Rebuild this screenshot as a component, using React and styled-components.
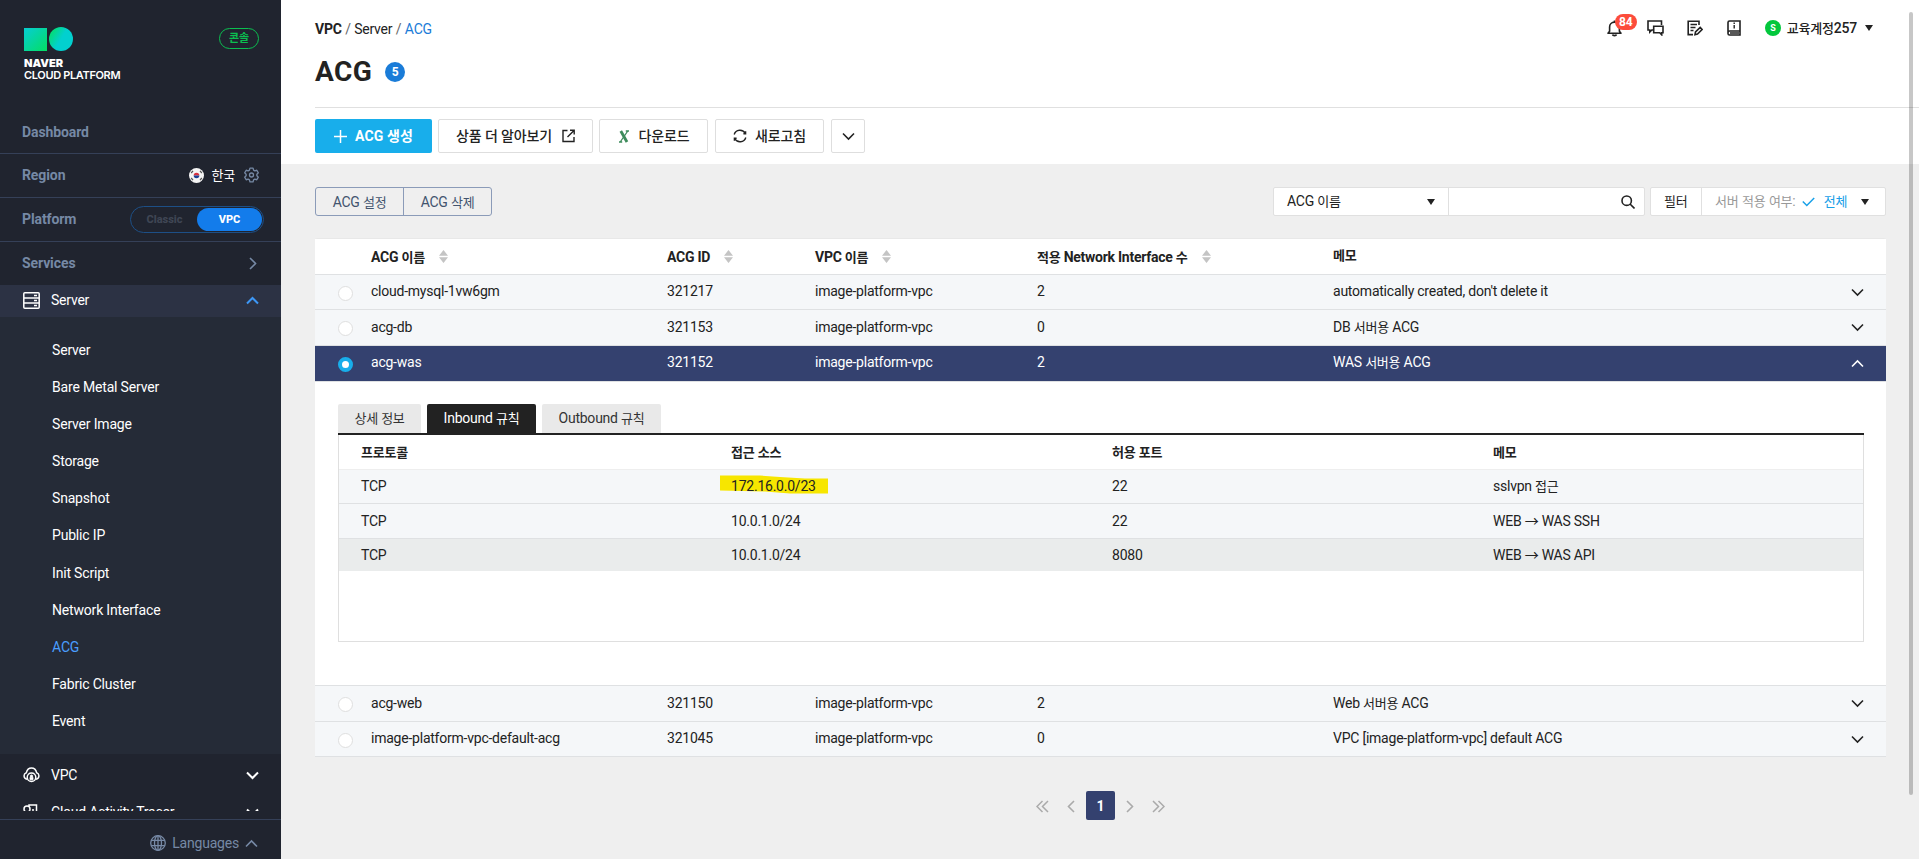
import React from "react";
import styled, { createGlobalStyle, css } from "styled-components";

const Global = createGlobalStyle`
  * { box-sizing: border-box; }
  body { margin: 0; background: #efefef; color: #222; overflow: hidden;
    font: 14px/20px Roboto, "Noto Sans CJK KR", sans-serif; letter-spacing: -0.23px; }
  button { font: inherit; letter-spacing: inherit; color: inherit; padding: 0; cursor: pointer; }
  svg { display: block; flex: none; }
`;

/* Hangul is set slightly smaller than the Latin text beside it */
const Hangul = styled.span`font-size: 0.93em; line-height: 1; letter-spacing: -0.25px;`;
const Mixed = ({ children }) => (
  <span>{String(children).split(/([\uac00-\ud7a3]+)/).map((s, i) => (i % 2 ? <Hangul key={i}>{s}</Hangul> : s))}</span>
);

const Shell = styled.div`display: flex; width: 100vw; height: 859px;`;

/* ---------- sidebar ---------- */
const Sidebar = styled.aside`
  width: 281px; height: 859px; flex: none; background: #20242f;
  display: flex; flex-direction: column;
`;
const Brand = styled.div`
  height: 111px; padding: 27px 22px 0 24px; display: flex; justify-content: space-between; align-items: flex-start; flex: none;
`;
const BrandName = styled.div`
  margin-top: 5px; color: #fff; font-family: Inter, sans-serif; font-size: 11px; line-height: 12px; font-weight: 600; letter-spacing: -0.35px;
  strong { display: block; font-weight: 900; letter-spacing: 0; }
`;
const ConsoleTag = styled.span`
  margin-top: 1px; width: 40px; height: 21px; border: 1.5px solid #0bbf50; border-radius: 11px;
  color: #0bbf50; font-size: 11px; line-height: 19px; text-align: center; font-weight: 700;
`;
const MenuLine = styled.div`
  height: ${(p) => p.$h || 44}px; flex: none; padding: 0 22px ${(p) => p.$up || 0}px; display: flex; align-items: center; justify-content: space-between;
  color: #7689a5; font-weight: 700; letter-spacing: -0.1px;
  border-bottom: ${(p) => (p.$last ? "0" : "1px solid #354058")};
`;
const RegionBox = styled.span`display: flex; align-items: center; color: #fff; font-weight: 400;
  & > span { margin: 0 9px 0 8px; }
`;
const Toggle = styled.span`
  width: 134px; height: 27px; margin-right: -5px; border: 1px solid #1d4f86; border-radius: 14px; padding: 1px; display: flex; 
  font-size: 11px; line-height: 23px; font-weight: 800; text-align: center; letter-spacing: 0;
`;
const ToggleItem = styled.span`
  flex: ${(p) => (p.$on ? "0 0 65px" : "1")}; border-radius: 12px;
  background: ${(p) => (p.$on ? "#137ceb" : "transparent")}; color: ${(p) => (p.$on ? "#fff" : "#3f4654")};
`;
const Group = styled.div`
  height: ${(p) => p.$h}px; flex: none; padding: 0 22px ${(p) => p.$up || 0}px 23px; display: flex; align-items: center; color: #fff;
  background: ${(p) => (p.$open ? "#2c3244" : "transparent")};
  span { margin-left: 11px; flex: 1; }
`;
const SubMenu = styled.nav`
  height: 437px; flex: none; background: #252b37; padding: 14px 0 0 52px;
`;
const SubItem = styled.a`
  display: block; height: 37.1px; line-height: 38px; color: ${(p) => (p.$active ? "#4a9eff" : "#fff")}; letter-spacing: -0.18px;
`;
const Clip = styled.div`height: 57px; overflow: hidden; flex: none;`;
const LangBar = styled.div`
  margin-top: 8px; height: 40px; flex: 1; border-top: 1px solid #354058; display: flex; align-items: center; justify-content: flex-end;
  padding: 7px 23px 0 0; gap: 6px; color: #7689a5; letter-spacing: -0.2px;
`;

/* ---------- page header ---------- */
const Main = styled.main`flex: 1; min-width: 0; position: relative;`;
const Header = styled.header`height: 164px; background: #fff; padding-left: 34px;`;
const TopBar = styled.div`height: 58px; padding: 0 46px 0 0; display: flex; align-items: center; justify-content: space-between;`;
const Crumbs = styled.div`
  b { font-weight: 700; } i { font-style: normal; color: #666; margin: 0 3.5px; } em { font-style: normal; color: #1a7cd8; }
`;
const Tools = styled.div`display: flex; align-items: center; height: 56px; align-self: flex-start;`;
const Tool = styled.span`width: 40px; display: flex;`;
const Bell = styled(Tool)`position: relative;`;
const BellCount = styled.span`
  position: absolute; left: 8px; top: -6px; width: 22px; height: 16px; border-radius: 8px; background: #fc4c3b; color: #fff;
  font-size: 12px; line-height: 16px; text-align: center; font-weight: 700; letter-spacing: 0;
`;
const Account = styled.span`
  display: flex; align-items: center; font-weight: 500; letter-spacing: -0.2px;
`;
const Avatar = styled.span`
  width: 16px; height: 16px; border-radius: 50%; background: #03c73c; color: #fff; font-size: 9px; line-height: 16px; text-align: center;
  font-weight: 700; margin: 0 6px 0 -2px;
`;
const Caret = styled.i`
  border: solid transparent; border-width: 6px 4px 0; border-top-color: #222; margin-left: ${(p) => p.$gap || 0}px;
`;
const TitleRow = styled.div`height: 50px; border-bottom: 1px solid #e0e0e0; display: flex; align-items: flex-start;`;
const Title = styled.h1`margin: 0; font-size: 28px; line-height: 28px; font-weight: 700; letter-spacing: 0.4px;`;
const Count = styled.span`
  margin: 4px 0 0 13px; width: 20px; height: 20px; border-radius: 50%; background: #1a7cd8; color: #fff; font-size: 12px; line-height: 20px;
  font-weight: 700; text-align: center; letter-spacing: 0;
`;
const Actions = styled.div`display: flex; padding-top: 11px;`;
const Action = styled.button`
  width: ${(p) => p.$w}px; height: 34px; margin-right: ${(p) => p.$mr || 6}px; border-radius: 2px; display: flex; align-items: center; justify-content: center;
  gap: ${(p) => p.$gap || 8}px; font-weight: 500; letter-spacing: -0.15px;
  ${(p) => p.$primary ? css`background: #18aeeb; color: #fff; border: 0; font-weight: 700; letter-spacing: 0.1px;` : css`background: #fff; border: 1px solid #dedede;`}
`;

/* ---------- content ---------- */
const Content = styled.section`padding: 23px 33px 0 34px;`;
const FilterRow = styled.div`display: flex; justify-content: space-between; height: 29px;`;
const Pair = styled.div`display: flex; border: 1px solid #8b9bb8; border-radius: 3px; width: 177px;`;
const PairButton = styled.button`
  flex: 1; border: 0; background: none; color: #42546e;
  & + & { border-left: 1px solid #8b9bb8; }
`;
const Boxes = styled.div`display: flex; gap: 5px;`;
const Box = styled.div`display: flex; background: #fff; border: 1px solid #e0e0e0; border-radius: 2px; line-height: 27px;`;
const Cell = styled.div`
  width: ${(p) => p.$w}px; display: flex; align-items: center; padding: 0 ${(p) => p.$pr ?? 13}px 0 13px; justify-content: ${(p) => p.$j || "space-between"};
  & + & { border-left: 1px solid #e0e0e0; }
`;
const Muted = styled.span`color: #999; letter-spacing: 0;`;
const Blue = styled.span`color: #18a0e8; margin-left: 9px;`;

const Table = styled.div`margin-top: 22px; background: #fff; border: solid #e8e8e8; border-width: 1px 0 0; border-radius: 2px;`;
const Row = styled.div`
  height: ${(p) => p.$h}px; border-bottom: 1px solid #dfe1e3; display: grid; grid-template-columns: 56px 296px 148px 222px 296px 1fr 36px; align-items: center;
  padding-bottom: 2px; background: #f5f7f9;
  ${(p) => p.$head && css`background: #fff; font-weight: 700; padding-bottom: 0; letter-spacing: -0.26px;`}
  ${(p) => p.$on && css`background: #34416f; color: #fff; padding-bottom: 3px;`}
`;
const HeadCell = styled.div`display: flex; align-items: center; gap: 14px; padding-bottom: ${(p) => (p.$plain ? 4 : 0)}px;`;
const Radio = styled.span`
  width: 15px; height: 15px; margin: 4px 0 0 23px; border-radius: 50%; display: block; background: #fff; border: 1px solid #dfdfdf;
  ${(p) => p.$on && css`border: 4px solid #18aeeb;`}
`;
const Toggler = styled.span`padding-top: 2px; svg { margin-left: 1px; }`;

const Detail = styled.div`height: 304px; padding: 22px 22px 0 23px; border-bottom: 1px solid #dfe1e3;`;
const Tabs = styled.div`display: flex; gap: 6px; height: 31px; border-bottom: 2px solid #222;`;
const Tab = styled.div`
  width: ${(p) => p.$w}px; background: ${(p) => (p.$on ? "#222" : "#e9e9e9")}; color: ${(p) => (p.$on ? "#fff" : "#333")};
  border-radius: 2px 2px 0 0; text-align: center; line-height: 29px;
`;
const Rules = styled.div`height: 207px; border: 1px solid #dfdfdf; border-top: 0;`;
const RuleRow = styled.div`
  height: ${(p) => p.$h}px; display: grid; grid-template-columns: 370px 381px 381px 1fr; padding: 0 0 ${(p) => p.$up || 0}px 22px; align-items: center;
  background: #f5f7f9; border-bottom: 1px solid #dfe1e3;
  ${(p) => p.$head && css`background: #fff; font-weight: 700; border-color: #eee;`}
  ${(p) => p.$hover && css`background: #eaecec; border: 0;`}
`;
const Marked = styled.span`position: relative; & > span { position: relative; }`;
const Stroke = styled.svg`position: absolute; left: -11px; top: -1px;`;

const Pager = styled.div`
  display: flex; justify-content: center; align-items: center; height: 29px; margin-top: 34px; color: #aaa; gap: 16px;
  svg { margin-top: 2px; }
`;
const Current = styled.span`
  width: 29px; height: 29px; border-radius: 2px; background: #34416f; color: #fff; text-align: center; line-height: 30px; font-weight: 700; margin: 0 -8px;
`;
const ScrollThumb = styled.div`position: absolute; right: 6px; top: 12px; width: 4px; height: 783px; border-radius: 2px; background: rgba(0, 0, 0, 0.22);`;

/* ---------- drawings ---------- */
const Chevron = ({ dir = "down", size = 13, w = 1.6, color = "currentColor" }) => {
  const d = { down: "M1 3.5l5.5 5.5L12 3.5", up: "M1 9.5L6.5 4 12 9.5", right: "M4 1l5.5 5.5L4 12", left: "M9 1L3.5 6.5 9 12" }[dir];
  return <svg width={size} height={size} viewBox="0 0 13 13" fill="none" stroke={color} strokeWidth={w}><path d={d} /></svg>;
};
const DoubleChevron = ({ flip }) => (
  <svg width="13" height="13" viewBox="0 0 13 13" fill="none" stroke="currentColor" strokeWidth="1.5">
    <path d={flip ? "M1 1l5.5 5.5L1 12M6.5 1L12 6.5 6.5 12" : "M6.5 1L1 6.5 6.5 12M12 1L6.5 6.5 12 12"} />
  </svg>
);
const Logo = () => (
  <svg width="50" height="25" viewBox="0 0 50 25">
    <defs>
      <linearGradient id="sq" x1="0" y1="0" x2="1" y2="1"><stop offset=".1" stopColor="#06cfc9" /><stop offset=".95" stopColor="#04de68" /></linearGradient>
      <linearGradient id="ci" x1="0" y1="0.1" x2="1" y2=".7"><stop offset=".05" stopColor="#04de68" /><stop offset=".55" stopColor="#02d0cf" /></linearGradient>
    </defs>
    <rect y="1" width="23" height="23" fill="url(#sq)" /><circle cx="37" cy="12" r="12" fill="url(#ci)" />
  </svg>
);
const Flag = () => (
  <svg width="15" height="15" viewBox="0 0 15 15">
    <circle cx="7.5" cy="7.5" r="7.5" fill="#f4f4f4" />
    <path d="M4.7 7.5a2.8 2.8 0 0 1 5.6 0z" fill="#d8303f" /><path d="M4.7 7.5a2.8 2.8 0 0 0 5.6 0z" fill="#1c3f94" />
    <path d="M2.2 5L4 2.8M11 2.8L12.8 5M2.2 10L4 12.2M11 12.2l1.8-2.2" stroke="#555" strokeWidth="1.2" />
  </svg>
);
const Gear = () => (
  <svg width="15" height="16" viewBox="0 0 24 25" fill="none" stroke="#7689a5" strokeWidth="2.1" strokeLinejoin="round">
    <path d="M9.5 1.5h5l.8 3.2 2 1.2 3.2-1 2.4 4.2-2.3 2.3v2.2l2.3 2.3-2.4 4.2-3.2-1-2 1.2-.8 3.2h-5l-.8-3.2-2-1.2-3.2 1L1.1 15.9l2.3-2.3v-2.2L1.1 9.1l2.4-4.2 3.2 1 2-1.2z" />
    <circle cx="12" cy="12.5" r="3.2" />
  </svg>
);
const ServerIcon = () => (
  <svg width="17" height="17" viewBox="0 0 17 17" fill="none" stroke="#fff" strokeWidth="1.5">
    <rect x=".8" y=".8" width="15.4" height="15.4" rx="1" /><path d="M1 6h15M1 11h15" /><path d="M11 3.5h3M11 8.5h3M11 13.5h3" />
  </svg>
);
const CloudIcon = () => (
  <svg width="17" height="16" viewBox="0 0 17 16" fill="none" stroke="#fff" strokeWidth="1.5">
    <path d="M4 12.2A3.3 3.3 0 0 1 3.3 5.8C4 2.8 6 1 8.5 1s4.5 1.8 5.2 4.8A3.3 3.3 0 0 1 13 12.2" />
    <circle cx="8.5" cy="10.3" r="4.3" /><path d="M7 12.8v-2.5h3v2.5zM7.4 10V9a1.1 1.1 0 0 1 2.2 0v1" fill="#fff" strokeWidth=".8" />
  </svg>
);
const TracerIcon = () => (
  <svg width="17" height="17" viewBox="0 0 17 17" fill="none" stroke="#fff" strokeWidth="1.5">
    <path d="M6 2V1h7.5v14H6M10 5v4" /><circle cx="4" cy="5" r="3" /><path d="M6 7l3 3" />
  </svg>
);
const Globe = () => (
  <svg width="16" height="16" viewBox="0 0 16 16" fill="none" stroke="#7689a5" strokeWidth="1.3">
    <circle cx="8" cy="8" r="7.3" /><ellipse cx="8" cy="8" rx="3.5" ry="7.3" /><path d="M8 .7v14.6M1.2 5.3h13.6M1.2 10.7h13.6" />
  </svg>
);
const BellIcon = () => (
  <svg width="15" height="17" viewBox="0 0 15 17" fill="none" stroke="#222" strokeWidth="1.6">
    <path d="M1 13.2h13l-1.6-2V7A4.9 4.9 0 0 0 2.6 7v4.2z" strokeLinejoin="round" /><path d="M5.5 14.5c.3 1.5 3.7 1.5 4 0M7.5 2V.5" />
  </svg>
);
const ChatIcon = () => (
  <svg width="17" height="16" viewBox="0 0 17 16" fill="none" stroke="#222" strokeWidth="1.6">
    <path d="M6 10H4.8L2.8 12V10H1V1h13.5v4" /><path d="M6.7 6.2h9.3v6.6h-1.3v2l-2-2h-6z" />
  </svg>
);
const NoteIcon = () => (
  <svg width="16" height="16" viewBox="0 0 16 16" fill="none" stroke="#222" strokeWidth="1.6">
    <path d="M12 5V1.2H1.2v13.4H6M3.5 4.5h6.5M3.5 7.5h5M3.5 10.5h3" /><path d="M8 14.6l.5-2.6 4.7-4.5 1.9 2-4.6 4.5z" />
  </svg>
);
const BookIcon = () => (
  <svg width="14" height="16" viewBox="0 0 14 16" fill="none" stroke="#222" strokeWidth="1.6">
    <path d="M13 11V1H2.5C1.5 1 1 1.6 1 2.5v11c0 1 .6 1.500 1.500 1.500H13v-4H2.500C1.500 11 1 12 1 13" /><path d="M7.200 5v3.500M7.200 2.500V4M3 13h9" strokeWidth="1.4" />
  </svg>
);
const External = () => (
  <svg width="13" height="14" viewBox="0 0 13 13" fill="none" stroke="#222" strokeWidth="1.4">
    <path d="M5.5 1H1v11h11V7.5M8 .8h4.200V5M12 1L5.500 7.500" />
  </svg>
);
const Refresh = () => (
  <svg width="14" height="14" viewBox="0 0 14 14" fill="none" stroke="#222" strokeWidth="1.4">
    <path d="M1.200 5.500A6 6 0 0 1 12.300 4.500M12.800 8.500A6 6 0 0 1 1.700 9.500M12.600 2.200v2.600H10.400M1.400 11.800V9.200h2.200" />
  </svg>
);
const Excel = () => (
  <svg width="12" height="13" viewBox="0 0 12 13" fill="none" stroke="#3d8b5b">
    <path d="M2.800 1L9 12" strokeWidth="2.800" /><path d="M9.800 1L2.200 12M7.800 1h3.200M1 12h3.200" strokeWidth="1.300" />
  </svg>
);
const Plus = () => <svg width="13" height="13" viewBox="0 0 13 13" stroke="#fff" strokeWidth="1.5"><path d="M6.500 0v13M0 6.500h13" /></svg>;
const Search = () => <svg width="14" height="14" viewBox="0 0 14 14" fill="none" stroke="#222" strokeWidth="1.6"><circle cx="5.700" cy="5.700" r="4.700" /><path d="M9 9l4.500 4.500" /></svg>;
const CheckMark = styled.svg`margin-left: 6px;`;
const Check = () => <CheckMark width="13" height="10" viewBox="0 0 13 10" fill="none" stroke="#18a0e8" strokeWidth="1.5"><path d="M.8 4.500l4 4L12.200 1" /></CheckMark>;
const Sort = () => <svg width="9" height="13" viewBox="0 0 9 13" fill="#c4c4c4"><path d="M0 5.700L4.500 0 9 5.700zM0 7.300h9L4.500 13z" /></svg>;

const subItems = ["Server", "Bare Metal Server", "Server Image", "Storage", "Snapshot", "Public IP", "Init Script", "Network Interface", "ACG", "Fabric Cluster", "Event"];
const groups = [
  { h: 35, name: "cloud-mysql-1vw6gm", id: "321217", n: 2, memo: "automatically created, don't delete it" },
  { h: 36, name: "acg-db", id: "321153", n: 0, memo: "DB 서버용 ACG" },
  { h: 36, name: "acg-was", id: "321152", n: 2, memo: "WAS 서버용 ACG", on: true },
  { h: 36, name: "acg-web", id: "321150", n: 2, memo: "Web 서버용 ACG" },
  { h: 35, name: "image-platform-vpc-default-acg", id: "321045", n: 0, memo: "VPC [image-platform-vpc] default ACG" },
];
const rules = [
  { h: 34, src: "172.16.0.0/23", port: "22", memo: "sslvpn 접근", mark: true },
  { h: 35, src: "10.0.1.0/24", port: "22", memo: "WEB → WAS SSH" },
  { h: 32, src: "10.0.1.0/24", port: "8080", memo: "WEB → WAS API", hover: true },
];

const RuleDetail = () => (
  <Detail>
    <Tabs>
      <Tab $w={83}><Mixed>상세 정보</Mixed></Tab><Tab $w={109} $on><Mixed>Inbound 규칙</Mixed></Tab><Tab $w={119}><Mixed>Outbound 규칙</Mixed></Tab>
    </Tabs>
    <Rules>
      <RuleRow $h={35} $head>
        {["프로토콜", "접근 소스", "허용 포트", "메모"].map((t) => <Mixed key={t}>{t}</Mixed>)}
      </RuleRow>
      {rules.map((r, i) => (
        <RuleRow key={i} $h={r.h} $hover={r.hover} $up={r.mark ? 1 : 0}>
          <span>TCP</span>
          {r.mark ? (
            <Marked>
              <Stroke width="109" height="20" viewBox="0 0 109 20"><path d="M0 .5L40 .5 60 2 85 3.5H108V18.500H70L45 16.500 0 15.500z" fill="#f7e600" /></Stroke>
              <span>{r.src}</span>
            </Marked>
          ) : <span>{r.src}</span>}
          <span>{r.port}</span><Mixed>{r.memo}</Mixed>
        </RuleRow>
      ))}
    </Rules>
  </Detail>
);

export default function App() {
  return (
    <Shell>
      <Global />
      <Sidebar>
        <Brand>
          <div><Logo /><BrandName><strong>NAVER</strong>CLOUD PLATFORM</BrandName></div>
          <ConsoleTag>콘솔</ConsoleTag>
        </Brand>
        <MenuLine $h={43}>Dashboard</MenuLine>
        <MenuLine $up={1}>Region<RegionBox><Flag /><Mixed>한국</Mixed><Gear /></RegionBox></MenuLine>
        <MenuLine $up={1}>Platform<Toggle><ToggleItem>Classic</ToggleItem><ToggleItem $on>VPC</ToggleItem></Toggle></MenuLine>
        <MenuLine $h={43} $up={1} $last>Services<Chevron dir="right" /></MenuLine>
        <Group $h={32} $up={2} $open><ServerIcon /><span>Server</span><Chevron dir="up" color="#3d97f5" w={2} /></Group>
        <SubMenu>{subItems.map((s) => <SubItem key={s} $active={s === "ACG"}>{s}</SubItem>)}</SubMenu>
        <Clip>
          <Group $h={42}><CloudIcon /><span>VPC</span><Chevron w={2} /></Group>
          <Group $h={32}><TracerIcon /><span>Cloud Activity Tracer</span><Chevron w={2} /></Group>
        </Clip>
        <LangBar><Globe />Languages<Chevron dir="up" /></LangBar>
      </Sidebar>
      <Main>
        <Header>
          <TopBar>
            <Crumbs><b>VPC</b><i>/</i>Server<i>/</i><em>ACG</em></Crumbs>
            <Tools>
              <Bell><BellIcon /><BellCount>84</BellCount></Bell>
              <Tool><ChatIcon /></Tool><Tool><NoteIcon /></Tool><Tool><BookIcon /></Tool>
              <Account><Avatar>S</Avatar><Mixed>교육계정257</Mixed><Caret $gap={8} /></Account>
            </Tools>
          </TopBar>
          <TitleRow><Title>ACG</Title><Count>5</Count></TitleRow>
          <Actions>
            <Action $primary $w={117}><Plus />ACG 생성</Action>
            <Action $w={155} $gap={10}>상품 더 알아보기<External /></Action>
            <Action $w={109} $mr={7} $gap={9}><Excel />다운로드</Action>
            <Action $w={109} $mr={7}><Refresh />새로고침</Action>
            <Action $w={34}><Chevron /></Action>
          </Actions>
        </Header>
        <Content>
          <FilterRow>
            <Pair><PairButton><Mixed>ACG 설정</Mixed></PairButton><PairButton><Mixed>ACG 삭제</Mixed></PairButton></Pair>
            <Boxes>
              <Box><Cell $w={174}><Mixed>ACG 이름</Mixed><Caret /></Cell><Cell $w={196} $pr={9}><span /><Search /></Cell></Box>
              <Box><Cell $w={50}><Mixed>필터</Mixed></Cell><Cell $w={184} $j="flex-start"><Muted><Mixed>서버 적용 여부:</Mixed></Muted><Check /><Blue><Mixed>전체</Mixed></Blue><Caret $gap={14} /></Cell></Box>
            </Boxes>
          </FilterRow>
          <Table>
            <Row $h={36} $head>
              <span />
              <HeadCell><Mixed>ACG 이름</Mixed><Sort /></HeadCell><HeadCell><Mixed>ACG ID</Mixed><Sort /></HeadCell><HeadCell><Mixed>VPC 이름</Mixed><Sort /></HeadCell>
              <HeadCell><Mixed>적용 Network Interface 수</Mixed><Sort /></HeadCell><HeadCell $plain><Mixed>메모</Mixed></HeadCell>
            </Row>
            {groups.map((g) => (
              <React.Fragment key={g.id}>
                <Row $h={g.h} $on={g.on}>
                  <Radio $on={g.on} /><span>{g.name}</span><span>{g.id}</span><span>image-platform-vpc</span><span>{g.n}</span><Mixed>{g.memo}</Mixed>
                  <Toggler><Chevron dir={g.on ? "up" : "down"} /></Toggler>
                </Row>
                {g.on && <RuleDetail />}
              </React.Fragment>
            ))}
          </Table>
          <Pager><DoubleChevron /><Chevron dir="left" /><Current>1</Current><Chevron dir="right" /><DoubleChevron flip /></Pager>
        </Content>
        <ScrollThumb />
      </Main>
    </Shell>
  );
}
